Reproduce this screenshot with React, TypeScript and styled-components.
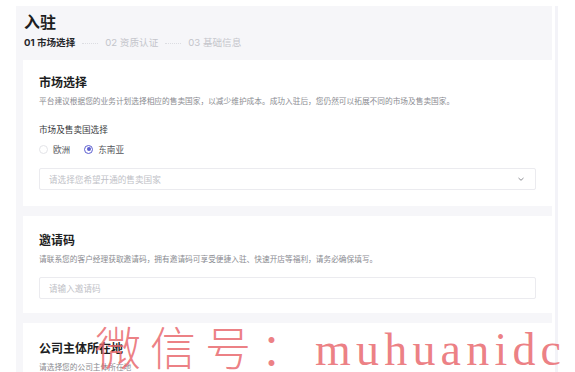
import React from "react";
import styled, { createGlobalStyle } from "styled-components";

const GlobalStyle = createGlobalStyle`
    html, body {
        margin: 0;
        padding: 0;
        background: #ffffff;
    }
    body {
        font-family: "Inter", "Noto Sans CJK SC", sans-serif;
        color: #1f2024;
        overflow: hidden;
    }
`;

const Page = styled.div`
    position: relative;
    display: flex;
    align-items: flex-start;
    height: 372px;
    padding: 6px 0 0 16px;
    box-sizing: border-box;
    overflow: hidden;
`;

const Panel = styled.div`
    width: 536px;
    background: #f6f6f9;
    padding: 0 0 40px 7px;
    box-sizing: border-box;
    display: flex;
    flex-direction: column;
`;

const ScrollTrack = styled.div`
    width: 3px;
    height: 366px;
    margin-left: 3px;
    background: #f3f3f8;
`;

const Header = styled.div`
    padding: 6px 0 0 1px;
    height: 54px;
    box-sizing: border-box;
`;

const Title = styled.h1`
    margin: 0;
    font-size: 16px;
    line-height: 20px;
    font-weight: 700;
    color: #1d1e22;
`;

const Steps = styled.div`
    display: flex;
    align-items: center;
    gap: 7px;
    margin-top: 5px;
    font-size: 9.6px;
    line-height: 12px;
`;

const Step = styled.span<{ $active?: boolean }>`
    color: ${(p) => (p.$active ? "#26272b" : "#c4c5cb")};
    font-weight: ${(p) => (p.$active ? 700 : 400)};
`;

const Dots = styled.span`
    width: 16px;
    border-top: 1.5px dotted #dcdde2;
    height: 0;
`;

const Card = styled.section<{ $top: number; $bottom: number }>`
    background: #ffffff;
    padding: ${(p) => p.$top}px 16px ${(p) => p.$bottom}px 16px;
    margin-bottom: 10px;
    display: flex;
    flex-direction: column;
`;

const CardTitle = styled.h2`
    margin: 0;
    font-size: 12px;
    line-height: 16px;
    font-weight: 700;
    color: #1d1e22;
`;

const Desc = styled.p`
    margin: 5px 0 0;
    font-size: 7.7px;
    line-height: 12px;
    color: #8a8b91;
    white-space: nowrap;
`;

const FieldLabel = styled.div`
    margin-top: 16px;
    font-size: 8.6px;
    line-height: 12px;
    color: #3a3b40;
`;

const RadioRow = styled.div`
    display: flex;
    align-items: center;
    gap: 14px;
    margin-top: 6px;
    height: 14px;
`;

const RadioItem = styled.label`
    display: flex;
    align-items: center;
    gap: 5px;
    font-size: 8.6px;
    color: #55565c;
`;

const RadioDot = styled.span<{ $checked?: boolean }>`
    width: 9px;
    height: 9px;
    border-radius: 50%;
    box-sizing: border-box;
    border: 1px solid ${(p) => (p.$checked ? "#5d5fd0" : "#e3e4e8")};
    display: flex;
    align-items: center;
    justify-content: center;
    &::after {
        content: "";
        width: 4px;
        height: 4px;
        border-radius: 50%;
        background: ${(p) => (p.$checked ? "#5d5fd0" : "transparent")};
    }
`;

const InputBox = styled.div<{ $mt: number }>`
    margin-top: ${(p) => p.$mt}px;
    height: 22px;
    border: 1px solid #ebebef;
    border-radius: 2px;
    box-sizing: border-box;
    display: flex;
    align-items: center;
    justify-content: space-between;
    padding: 0 10px 0 9px;
    font-size: 8.6px;
    color: #c0c1c7;
`;

const Watermark = styled.div`
    position: absolute;
    left: 95px;
    top: 321px;
    display: flex;
    align-items: baseline;
    font-family: "Liberation Serif", "Noto Sans CJK SC", serif;
    font-size: 46px;
    line-height: 48px;
    color: rgba(232, 100, 106, 0.82);
    white-space: nowrap;
    pointer-events: none;
`;

const WaterCjk = styled.span`
    font-family: "Noto Sans CJK SC", serif;
    font-weight: 300;
    letter-spacing: 9px;
`;

const WaterLatin = styled.span`
    letter-spacing: 5.2px;
`;

const Chevron = () => (
    <svg width="8" height="8" viewBox="0 0 8 8">
        <path d="M1.5 3 L4 5.3 L6.5 3" fill="none" stroke="#8d8e94" strokeWidth="1" />
    </svg>
);

function App() {
    return (
        <Page>
            <GlobalStyle />
            <Panel>
                <Header>
                    <Title>入驻</Title>
                    <Steps>
                        <Step $active>01 市场选择</Step>
                        <Dots />
                        <Step>02 资质认证</Step>
                        <Dots />
                        <Step>03 基础信息</Step>
                    </Steps>
                </Header>

                <Card $top={15} $bottom={16}>
                    <CardTitle>市场选择</CardTitle>
                    <Desc>平台建议根据您的业务计划选择相应的售卖国家，以减少维护成本。成功入驻后，您仍然可以拓展不同的市场及售卖国家。</Desc>
                    <FieldLabel>市场及售卖国选择</FieldLabel>
                    <RadioRow>
                        <RadioItem>
                            <RadioDot />
                            欧洲
                        </RadioItem>
                        <RadioItem>
                            <RadioDot $checked />
                            东南亚
                        </RadioItem>
                    </RadioRow>
                    <InputBox $mt={12}>
                        <span>请选择您希望开通的售卖国家</span>
                        <Chevron />
                    </InputBox>
                </Card>

                <Card $top={17} $bottom={14}>
                    <CardTitle>邀请码</CardTitle>
                    <Desc>请联系您的客户经理获取邀请码，拥有邀请码可享受便捷入驻、快速开店等福利，请务必确保填写。</Desc>
                    <InputBox $mt={11}>
                        <span>请输入邀请码</span>
                    </InputBox>
                </Card>

                <Card $top={18} $bottom={16}>
                    <CardTitle>公司主体所在地</CardTitle>
                    <Desc>请选择您的公司主体所在地</Desc>
                </Card>
            </Panel>
            <ScrollTrack />
            {/* watermark over the screenshot */}
            <Watermark>
                <WaterCjk>微信号：</WaterCjk>
                <WaterLatin>muhuanidc</WaterLatin>
            </Watermark>
        </Page>
    );
}

export default App;
